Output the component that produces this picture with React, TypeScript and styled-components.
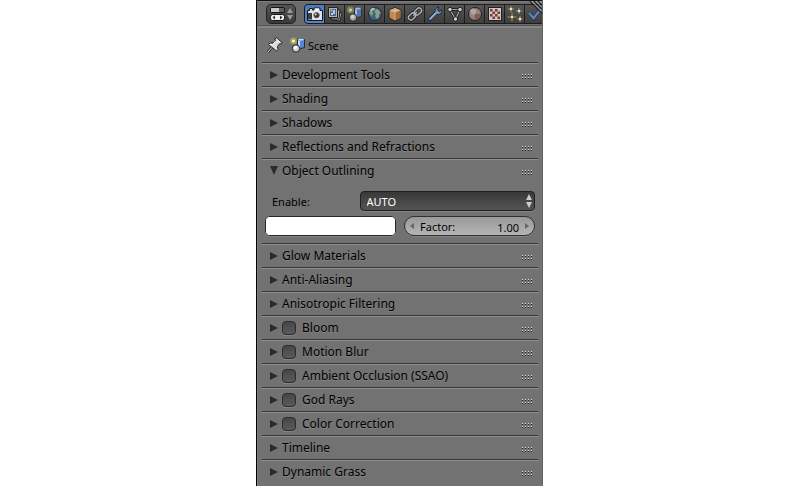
import React, { useState } from "react";
import styled, { createGlobalStyle } from "styled-components";

const GlobalStyle = createGlobalStyle`
  *, *::before, *::after { box-sizing: border-box; }
  body { margin: 0; background: #fff; overflow: hidden; }
  button, input, select { font: inherit; color: inherit; margin: 0; }
`;

const Editor = styled.main`
  width: calc(36% - 1px);
  min-width: 280px;
  min-height: 100vh;
  margin-left: 32%;
  background: #727272;
  border-left: 1px solid #000;
  border-right: 1px solid #626262;
  box-shadow: inset 1px 0 #7d7d7d;
  font-family: "Noto Sans", "DejaVu Sans", sans-serif;
  font-size: 12px;
  line-height: 16px;
  color: #000;
`;

const Header = styled.header`
  position: relative;
  display: flex;
  align-items: center;
  gap: 8px;
  height: 28px;
  padding-left: 9px;
  overflow: hidden;
  background: #6b6b6b;
  border-top: 1px solid #111;
  border-bottom: 2px solid #858585;
  box-shadow: inset 0 1px #7c7c7c, inset 0 -1px #525252;
`;

const EditorType = styled.button`
  display: flex;
  flex: none;
  width: 30px;
  height: 20px;
  padding: 0;
  border: 1px solid #222;
  border-radius: 5px;
  background: linear-gradient(#555, #3a3a3a);
`;

const Tabs = styled.nav`
  display: flex;
  flex: none;
  gap: 1px;
  border: 1px solid #1c1c1c;
  border-radius: 4px;
  background: #1c1c1c;
`;

const Tab = styled.button<{ $active: boolean }>`
  display: grid;
  place-items: center;
  width: 19px;
  height: 18px;
  padding: 0;
  border: 0;
  background: ${(p) => (p.$active ? "linear-gradient(#4a78c4, #5584cf)" : "linear-gradient(#555, #3e3e3e)")};
  &:first-child { border-radius: 3px 0 0 3px; }
`;

const Corner = styled.svg`
  position: absolute;
  top: 0;
  right: 0;
`;

const Context = styled.div`
  display: flex;
  align-items: center;
  height: 34px;
  padding: 0 10px;
  font-size: 11px;
`;

const PinButton = styled.button`
  display: flex;
  padding: 0;
  border: 0;
  margin-right: 7px;
  background: none;
`;

const SceneName = styled.span`
  margin-left: 2px;
  padding-top: 2px;
`;

const Panels = styled.div`
  padding: 0 4px 0 5px;
`;

const Panel = styled.section`
  border-top: 1px solid #383838;
  box-shadow: inset 0 1px #919191;
`;

const PanelHeader = styled.div`
  display: flex;
  align-items: center;
  height: 23px;
  padding: 1px 5px 0 7px;
  text-shadow: 0 1px rgba(255, 255, 255, 0.15);
`;

const Toggle = styled.button`
  display: flex;
  align-items: center;
  height: 16px;
  padding: 0;
  border: 0;
  background: none;
  text-shadow: inherit;
`;

const Arrow = styled.svg`
  flex: none;
  margin-right: 3px;
`;

const Check = styled.input`
  appearance: none;
  flex: none;
  width: 14px;
  height: 14px;
  margin: 0 6px 0 0;
  border: 1px solid #2b2b2b;
  border-radius: 4px;
  background: linear-gradient(#484848, #5a5a5a);
  box-shadow: 0 1px #858585;
  &:checked { background: #7da3dc; }
`;

const Grip = styled.svg`
  flex: none;
  margin-top: 3px;
  margin-left: auto;
`;

const Body = styled.div`
  display: grid;
  grid-template-columns: 1fr 1fr;
  gap: 5px 8px;
  padding: 9px 3px 7px;
  font-size: 11px;
`;

const Field = styled.div`
  grid-column: 1 / -1;
  display: grid;
  grid-template-columns: 35fr 65fr;
  align-items: center;
`;

const FieldLabel = styled.label`
  padding: 2px 0 0 7px;
`;

const SelectBox = styled.div`
  position: relative;
  display: grid;
`;

const Select = styled.select`
  appearance: none;
  width: 100%;
  height: 20px;
  padding: 2px 16px 0 6px;
  border: 1px solid #202020;
  border-radius: 4px;
  background: linear-gradient(#383838, #545454);
  box-shadow: 0 1px #858585;
  color: #fff;
`;

const SelectArrows = styled.svg`
  position: absolute;
  top: 3px;
  right: 2px;
  pointer-events: none;
`;

const Swatch = styled.input`
  appearance: none;
  width: 100%;
  height: 20px;
  padding: 0;
  border: 1px solid #262626;
  border-radius: 5px;
  background: #fff;
  box-shadow: 0 1px #858585;
  overflow: hidden;
  &::-webkit-color-swatch-wrapper { padding: 0; }
  &::-webkit-color-swatch { border: 0; }
`;

const NumberBox = styled.div`
  display: flex;
  align-items: center;
  min-width: 0;
  height: 20px;
  padding: 0 4px;
  border: 1px solid #303030;
  border-radius: 10px;
  background: linear-gradient(#999, #b5b5b5);
  box-shadow: 0 1px #858585;
`;

const Step = styled.button`
  display: flex;
  flex: none;
  padding: 0;
  border: 0;
  background: none;
`;

const NumberLabel = styled.label`
  padding: 2px 0 0 5px;
`;

const NumberInput = styled.input`
  flex: 1;
  min-width: 0;
  height: 18px;
  padding: 2px 5px 0 0;
  border: 0;
  background: none;
  text-align: right;
`;

const SceneShapes = () => (
  <>
    <circle cx="3.5" cy="4" r="3.5" fill="#d6cf58" opacity=".5" />
    <circle cx="3.5" cy="4" r="1.6" fill="#fbf7b0" />
    <path d="M7.500 2.500q3.500-2 7 0v8q-3.500 2-7 0z" fill="#5586d6" stroke="#202a3c" />
    <path d="M9 3.500v7" stroke="#c6dbf8" strokeWidth="2" />
    <ellipse cx="11" cy="2.500" rx="3" ry="1" fill="#c4daf8" />
    <circle cx="6" cy="11.500" r="3.700" fill="#ccc" stroke="#252525" />
    <circle cx="5.500" cy="10.500" r="1.800" fill="#fff" />
  </>
);

const links = (
  <>
    <rect x="7" y="3" width="8" height="5" rx="2.500" transform="rotate(-45 11 5.500)" />
    <rect x="1" y="8" width="8" height="5" rx="2.500" transform="rotate(-45 5 10.500)" />
    <path d="M6.500 9.500l3-3" />
  </>
);

const icons: { name: string; art: React.ReactNode }[] = [
  {
    name: "Render",
    art: (
      <>
        <path d="M.5 4.500h2v-2h3v1.500h1.500V2h6v2.500h2.500v10H.5z" fill="#dedede" stroke="#161616" />
        <path d="M1 7h4v6.500H1z" fill="#3d3d3d" />
        <path d="M8 3.500h4" stroke="#fff" strokeWidth="2" />
        <circle cx="9.500" cy="9.200" r="4.200" fill="#f0f0f0" />
        <circle cx="9.500" cy="9.200" r="2.800" fill="#333" stroke="#777" />
        <circle cx="8.700" cy="8.400" r="1" fill="#ddd" />
      </>
    ),
  },
  {
    name: "Render Layers",
    art: (
      <>
        <path d="M6 5l9 2-2 8-8-1z" fill="#999" stroke="#222" />
        <path d="M4 3l9 1-1 9-8 0z" fill="#aaa" stroke="#222" />
        <path d="M1.500 1.500h9v10h-9z" fill="#b4b4b4" stroke="#222" />
        <path d="M3 3h6v7H3z" fill="#49678f" />
        <circle cx="4.500" cy="4.500" r="1" fill="#d0ca78" />
        <path d="M6 4h2v4H6zM4 7h2v2H4z" fill="#b9c8dc" />
      </>
    ),
  },
  { name: "Scene", art: <g opacity=".75"><SceneShapes /></g> },
  {
    name: "World",
    art: (
      <>
        <circle cx="8" cy="8" r="6.500" fill="#3f6487" stroke="#222b33" />
        <path d="M3 5q2-3 5-2.500l-1 2-2 .5 1 2-1 3-3-3zM9 3l3 1 2 4-2 0 0 3-2 2-2-3 1-2-1.500-2z" fill="#8ba27c" />
        <path d="M3.500 4.500q1.500-2 4-2" stroke="#b9cbd6" strokeWidth="1.500" fill="none" />
      </>
    ),
  },
  {
    name: "Object",
    art: (
      <>
        <path d="M8 1.500l6 2.500v8l-6 3-6-3V4z" fill="#bd8a55" stroke="#2d241c" />
        <path d="M8 2l5.500 2.300L8 6.700 2.500 4.300z" fill="#d8b78e" />
        <path d="M8 7l5.500-2.500v7.200L8 14.500z" fill="#a06b40" />
        <path d="M8 7v7" stroke="#d4ab7c" />
      </>
    ),
  },
  {
    name: "Constraints",
    art: (
      <g fill="none" strokeLinecap="round">
        <g stroke="#222" strokeWidth="3">{links}</g>
        <g stroke="#b4b4b4" strokeWidth="1.500">{links}</g>
      </g>
    ),
  },
  {
    name: "Modifiers",
    art: (
      <>
        <path d="M1.500 12.500L8 6Q7.500 3 10 1.500l2-.3-1.500 2.600 1.500 1.700 2.700-1.500Q15 8 11 8.700L9.800 8.500 4 14.500Q1.500 15.500 1.500 12.500z" fill="#7291bb" stroke="#1e2938" />
        <path d="M3 12.700L9.200 6.400" stroke="#b0c4dd" />
      </>
    ),
  },
  {
    name: "Data",
    art: (
      <>
        <path d="M3 3.500h10L8.500 13z" fill="none" stroke="#222" strokeWidth="3" />
        <path d="M3 3.500h10L8.500 13z" fill="none" stroke="#a8a8a8" strokeWidth="1.200" />
        <circle cx="3" cy="3.500" r="2.200" fill="#d0d0d0" stroke="#222" />
        <circle cx="13" cy="3.500" r="2.200" fill="#d0d0d0" stroke="#222" />
        <circle cx="8.500" cy="13" r="2.200" fill="#d0d0d0" stroke="#222" />
      </>
    ),
  },
  {
    name: "Material",
    art: (
      <>
        <circle cx="8" cy="8" r="6.500" fill="#92827e" stroke="#252020" />
        <path d="M8 8V2a6 6 0 0 0-6 6zM8 8h6a6 6 0 0 1-6 6z" fill="#804740" opacity=".65" />
        <circle cx="6" cy="5.500" r="3" fill="#d5d0ce" opacity=".6" />
      </>
    ),
  },
  {
    name: "Texture",
    art: (
      <>
        <rect x="1.500" y="1.500" width="13" height="13" fill="#c8c8c8" stroke="#252020" />
        {[0, 1, 2, 3].map((r) =>
          [0, 1, 2, 3].map((c) =>
            (r + c) % 2 ? null : (
              <rect key={`${r}${c}`} x={3 + c * 2.5} y={3 + r * 2.5} width="2.5" height="2.5" fill="#84372f" />
            ),
          ),
        )}
      </>
    ),
  },
  {
    name: "Particles",
    art: (
      <>
        {[[4, 3, 3], [12, 5, 3], [5, 11, 4.5], [13, 13, 3]].map(([x, y, s]) => (
          <g key={`${x}-${y}`}>
            <path d={`M${x - s} ${y}h${s * 2}M${x} ${y - s}v${s * 2}`} stroke="#a3965c" />
            <circle cx={x} cy={y} r="1.200" fill="#efe9bd" />
          </g>
        ))}
      </>
    ),
  },
  {
    name: "Physics",
    art: (
      <>
        <path d="M2 7l4.500 5L14 3" fill="none" stroke="#26344c" strokeWidth="4" />
        <path d="M2 7l4.500 5L14 3" fill="none" stroke="#5f80b0" strokeWidth="2.500" />
      </>
    ),
  },
];

const EditorTypeIcon = () => (
  <svg width="28" height="18" aria-hidden="true">
    <rect x="3.500" y="2.500" width="14" height="5" rx="1.500" fill="#606060" stroke="#161616" />
    <path d="M4 3h8v4H4z" fill="#c8c8c8" />
    <rect x="3.500" y="9.500" width="14" height="6" rx="2" fill="#eee" stroke="#161616" />
    <path d="M8 10.500l-2.500 2 2.500 2zM13 10.500l2.500 2-2.500 2z" fill="#333" />
    <path d="M20 8l3-5 3 5zM20 10l3 5 3-5z" fill="#999" />
  </svg>
);

const PinIcon = () => (
  <svg width="16" height="18" viewBox="0 0 16 18" aria-hidden="true">
    <path d="M1 16L6 10" stroke="#222" strokeWidth="2.500" />
    <path d="M1 16L6 10" stroke="#eee" />
    <path d="M9 1.500l6 5-1 1.500-1.500-.3-2 2.800.5 3L9.500 15 1.500 8.500 3 7l3 .2 2.500-2.700L8 3z" fill="#ddd" stroke="#262626" />
    <path d="M9.500 3l3.500 3M8.500 5L6 8.500M3.500 8.300l2 .7" stroke="#fff" />
  </svg>
);

const Disclosure = ({ open }: { open: boolean }) => (
  <Arrow width="10" height="10" aria-hidden="true">
    <path d={open ? "M1 0h8L5 9z" : "M1 1v8l8-4z"} fill="#2b2b2b" />
  </Arrow>
);

const GripDots = () => (
  <Grip width="11" height="6" aria-hidden="true" shapeRendering="crispEdges">
    {[0, 3, 6, 9].map((x) =>
      [0, 3].map((y) => (
        <g key={`${x}${y}`}>
          <rect x={x} y={y} width="1" height="1" fill="#dedede" />
          <rect x={x} y={y + 1} width="1" height="1" fill="#222" />
        </g>
      )),
    )}
  </Grip>
);

const OutlineSettings = () => {
  const [factor, setFactor] = useState("1.00");
  const [color, setColor] = useState("#ffffff");
  const step = (d: number) => setFactor(((parseFloat(factor) || 0) + d).toFixed(2));
  return (
    <Body>
      <Field>
        <FieldLabel htmlFor="enable">Enable:</FieldLabel>
        <SelectBox>
          <Select id="enable" defaultValue="AUTO">
            <option>AUTO</option>
          </Select>
          <SelectArrows width="8" height="14" aria-hidden="true">
            <path d="M1 6l3-6 3 6zM1 8l3 6 3-6z" fill="#ccc" />
          </SelectArrows>
        </SelectBox>
      </Field>
      <Swatch type="color" aria-label="Outline color" value={color} onChange={(e) => setColor(e.target.value)} />
      <NumberBox>
        <Step aria-label="Decrease factor" onClick={() => step(-0.1)}>
          <svg width="6" height="8" aria-hidden="true"><path d="M5 1v6L1 4z" fill="#666" /></svg>
        </Step>
        <NumberLabel htmlFor="factor">Factor:</NumberLabel>
        <NumberInput id="factor" value={factor} onChange={(e) => setFactor(e.target.value)} />
        <Step aria-label="Increase factor" onClick={() => step(0.1)}>
          <svg width="6" height="8" aria-hidden="true"><path d="M1 1v6l4-3z" fill="#666" /></svg>
        </Step>
      </NumberBox>
    </Body>
  );
};

type PanelData = { title: string; check?: boolean; content?: React.ReactNode };

const panels: PanelData[] = [
  { title: "Development Tools" },
  { title: "Shading" },
  { title: "Shadows" },
  { title: "Reflections and Refractions" },
  { title: "Object Outlining", content: <OutlineSettings /> },
  { title: "Glow Materials" },
  { title: "Anti-Aliasing" },
  { title: "Anisotropic Filtering" },
  { title: "Bloom", check: true },
  { title: "Motion Blur", check: true },
  { title: "Ambient Occlusion (SSAO)", check: true },
  { title: "God Rays", check: true },
  { title: "Color Correction", check: true },
  { title: "Timeline" },
  { title: "Dynamic Grass" },
];

const PanelRow = ({ title, check, content }: PanelData) => {
  const [open, setOpen] = useState(Boolean(content));
  const flip = () => setOpen(!open);
  const id = title.replace(/\W+/g, "-");
  return (
    <Panel>
      <PanelHeader>
        {check ? (
          <>
            <Toggle aria-expanded={open} aria-label={`Expand ${title}`} onClick={flip}>
              <Disclosure open={open} />
            </Toggle>
            <Check type="checkbox" id={id} />
            <label htmlFor={id}>{title}</label>
          </>
        ) : (
          <Toggle aria-expanded={open} onClick={flip}>
            <Disclosure open={open} />
            {title}
          </Toggle>
        )}
        <GripDots />
      </PanelHeader>
      {open && content}
    </Panel>
  );
};

export default function App() {
  const [tab, setTab] = useState("Render");
  return (
    <>
      <GlobalStyle />
      <Editor>
        <Header>
          <EditorType aria-label="Editor type"><EditorTypeIcon /></EditorType>
          <Tabs aria-label="Properties">
            {icons.map(({ name, art }) => (
              <Tab key={name} aria-label={name} $active={name === tab} onClick={() => setTab(name)}>
                <svg width="16" height="16" viewBox="0 0 16 16" aria-hidden="true">{art}</svg>
              </Tab>
            ))}
          </Tabs>
          <Corner width="13" height="13" aria-hidden="true">
            <path d="M1 0l12 12M5 0l8 8M9 0l4 4" stroke="#222" strokeWidth="1.500" />
            <path d="M2.500 0L13 10.500M6.500 0L13 6.500M10.500 0L13 2.500" stroke="#c4c4c4" />
          </Corner>
        </Header>
        <Context>
          <PinButton aria-label="Pin context"><PinIcon /></PinButton>
          <svg width="16" height="16" viewBox="0 0 16 16" aria-hidden="true"><SceneShapes /></svg>
          <SceneName>Scene</SceneName>
        </Context>
        <Panels>
          {panels.map((p) => <PanelRow key={p.title} {...p} />)}
        </Panels>
      </Editor>
    </>
  );
}
